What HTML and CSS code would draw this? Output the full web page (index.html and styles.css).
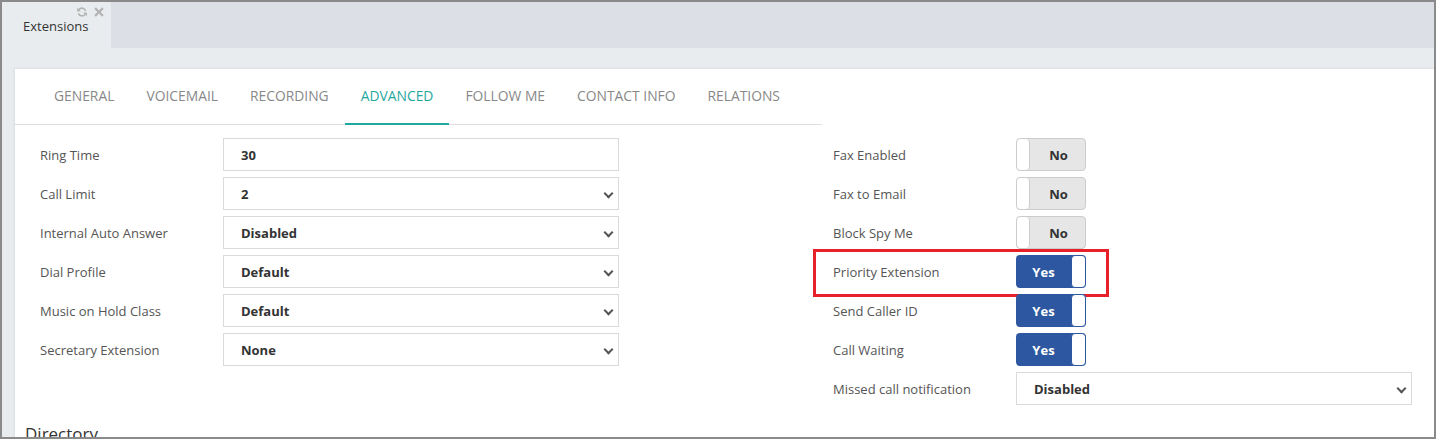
FILE: index.html
```html
<!DOCTYPE html>
<html lang="en">
<head>
  <meta charset="UTF-8">
  <title>Extensions</title>
  <link rel="stylesheet" href="styles.css">
</head>
<body>
  <div class="frame">
    <div class="tabbar">
      <div class="page-tab">
        <span class="page-tab-title">Extensions</span>
        <span class="page-tab-icons">
          <svg width="12" height="12" viewBox="0 0 16 16"><path d="M13.8 6.5A6 6 0 0 0 3.2 4L1.5 2.4V7.2h4.8L4.6 5.5A4.1 4.1 0 0 1 11.7 6.5zM2.2 9.5A6 6 0 0 0 12.8 12l1.7 1.6V8.8H9.7l1.7 1.7A4.1 4.1 0 0 1 4.3 9.5z" fill="#b3b3b3"/></svg>
          <svg width="10" height="10" viewBox="0 0 16 16"><path d="M3 0.5L8 5.5 13 0.5 15.5 3 10.5 8 15.5 13 13 15.5 8 10.5 3 15.5 0.5 13 5.5 8 0.5 3z" fill="#b3b3b3"/></svg>
        </span>
      </div>
    </div>

    <div class="content">
      <div class="card">
        <ul class="nav">
          <li><a href="#">GENERAL</a></li>
          <li><a href="#">VOICEMAIL</a></li>
          <li><a href="#">RECORDING</a></li>
          <li><a href="#" class="active">ADVANCED</a></li>
          <li><a href="#">FOLLOW ME</a></li>
          <li><a href="#">CONTACT INFO</a></li>
          <li><a href="#">RELATIONS</a></li>
        </ul>

        <div class="columns">
          <div class="col-left">
            <div class="field">
              <label>Ring Time</label>
              <div class="input">30</div>
            </div>
            <div class="field">
              <label>Call Limit</label>
              <div class="input select">2</div>
            </div>
            <div class="field">
              <label>Internal Auto Answer</label>
              <div class="input select">Disabled</div>
            </div>
            <div class="field">
              <label>Dial Profile</label>
              <div class="input select">Default</div>
            </div>
            <div class="field">
              <label>Music on Hold Class</label>
              <div class="input select">Default</div>
            </div>
            <div class="field">
              <label>Secretary Extension</label>
              <div class="input select">None</div>
            </div>
          </div>

          <div class="col-right">
            <div class="field">
              <label>Fax Enabled</label>
              <div class="toggle off"><span class="knob"></span><span class="state">No</span></div>
            </div>
            <div class="field">
              <label>Fax to Email</label>
              <div class="toggle off"><span class="knob"></span><span class="state">No</span></div>
            </div>
            <div class="field">
              <label>Block Spy Me</label>
              <div class="toggle off"><span class="knob"></span><span class="state">No</span></div>
            </div>
            <div class="field highlighted">
              <label>Priority Extension</label>
              <div class="toggle on"><span class="state">Yes</span><span class="knob"></span></div>
            </div>
            <div class="field">
              <label>Send Caller ID</label>
              <div class="toggle on"><span class="state">Yes</span><span class="knob"></span></div>
            </div>
            <div class="field">
              <label>Call Waiting</label>
              <div class="toggle on"><span class="state">Yes</span><span class="knob"></span></div>
            </div>
            <div class="field">
              <label>Missed call notification</label>
              <div class="input select">Disabled</div>
            </div>
          </div>
        </div>

        <h3 class="section-title">Directory</h3>
      </div>
    </div>
  </div>
</body>
</html>
```

FILE: styles.css
```css
* {
  margin: 0;
  padding: 0;
  box-sizing: border-box;
}

html, body {
  height: 100%;
  overflow: hidden;
}

body {
  font-family: "Open Sans", "Liberation Sans", sans-serif;
  font-size: 13px;
  color: #333;
}

.frame {
  height: 100vh;
  border: 2px solid #8a8a8a;
  background-color: #e9ecef;
  overflow: hidden;
}

/* page tabs */
.tabbar {
  height: 46px;
  background-color: #dcdfe6;
  display: flex;
}

.page-tab {
  position: relative;
  width: 109px;
  background-color: #e9ecef;
  padding-left: 21px;
  padding-top: 15px;
  color: #333;
}

.page-tab-icons {
  position: absolute;
  top: 4px;
  right: 7px;
  display: flex;
  gap: 6px;
  align-items: center;
}

/* content card */
.content {
  padding: 20px 0 0 13px;
}

.card {
  background-color: #fff;
  border-top: 1px solid #dfe2e6;
  box-shadow: -1px 0 2px rgba(0, 0, 0, 0.06);
  height: 400px;
}

.nav {
  list-style: none;
  display: flex;
  width: 807px;
  padding-left: 23px;
  border-bottom: 1px solid #dedede;
  height: 56px;
  font-size: 13.85px;
}

.nav a {
  display: block;
  height: 56px;
  line-height: 53px;
  padding: 0 16px;
  color: #888;
  text-decoration: none;
  margin-bottom: -1px;
}

.nav a.active {
  color: #1fa8a0;
  border-bottom: 2px solid #1fa8a0;
}

/* form columns */
.columns {
  display: flex;
  padding-top: 13px;
  padding-left: 25px;
}

.col-left {
  width: 782px;
  display: flex;
  flex-direction: column;
  gap: 6px;
}

.col-right {
  padding-left: 11px;
  display: flex;
  flex-direction: column;
  gap: 6px;
}

.field {
  display: flex;
  align-items: center;
  height: 33px;
  position: relative;
}

.field label {
  width: 183px;
  color: #555;
}

.input {
  width: 396px;
  height: 33px;
  border: 1px solid #dadada;
  padding-left: 17px;
  padding-top: 1px;
  line-height: 31px;
  font-weight: bold;
  color: #333;
  position: relative;
}

.input.select::after {
  content: "";
  position: absolute;
  right: 6px;
  top: 12px;
  width: 5px;
  height: 5px;
  border-right: 2px solid #555;
  border-bottom: 2px solid #555;
  transform: rotate(45deg);
}

/* yes / no toggles */
.toggle {
  width: 70px;
  height: 33px;
  border-radius: 4px;
  display: flex;
  overflow: hidden;
  font-weight: bold;
}

.toggle .state {
  flex: 1;
  text-align: center;
  line-height: 34px;
}

.toggle .knob {
  width: 14px;
  background-color: #fff;
  border-radius: 4px;
}

.toggle.off {
  background-color: #e6e6e6;
  border: 1px solid #ccc;
  color: #333;
}

.toggle.off .knob {
  border-right: 1px solid #ccc;
  width: 13px;
}

.toggle.off .state {
  line-height: 32px;
  padding-left: 2px;
}

.toggle.on {
  background-color: #2d57a0;
  color: #fff;
}

.toggle.on .knob {
  border: 1px solid #2d57a0;
  width: 15px;
}

.highlighted::after {
  content: "";
  box-sizing: border-box;
  position: absolute;
  left: -20px;
  top: -6px;
  width: 296px;
  height: 48px;
  border: 3px solid #e8202a;
}

.section-title {
  font-weight: normal;
  font-size: 17px;
  color: #333;
  padding-left: 10px;
  margin-top: 17px;
}
```
